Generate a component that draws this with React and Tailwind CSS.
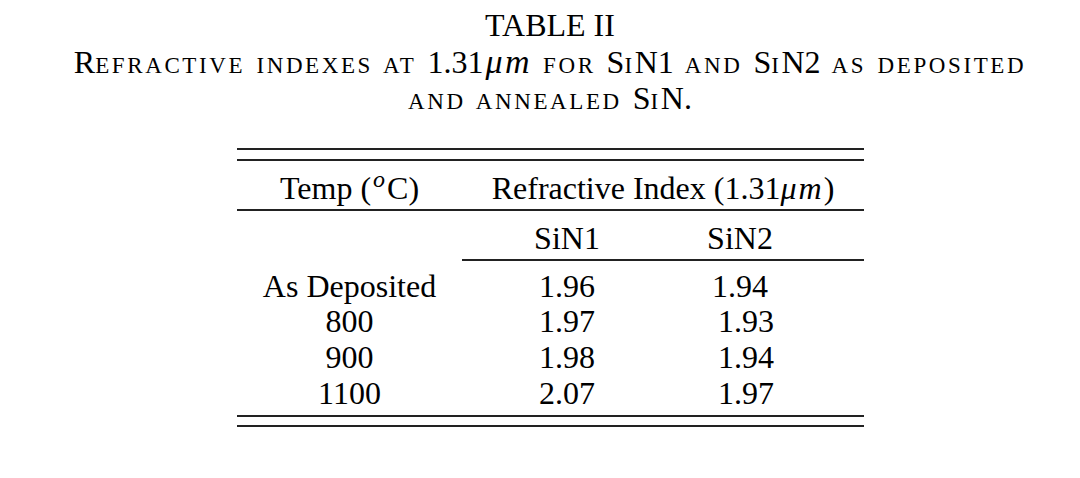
function Sc({ children }) {
  return <span className="text-[23px] leading-none tracking-[2.6px]">{children}</span>;
}

export default function App() {
  const rows = [
    ["As Deposited", "1.96", "1.94", false],
    ["800", "1.97", "1.93", true],
    ["900", "1.98", "1.94", true],
    ["1100", "2.07", "1.97", true],
  ];

  return (
    <div className="min-h-screen w-[1080px] bg-white text-black font-['Liberation_Serif','Times_New_Roman',serif]">
      {/* CAPTION */}
      <div className="pl-[20px] pt-[7px] text-center text-[32px] leading-[36.5px]">
        <div>TABLE II</div>
        <div className="whitespace-nowrap [word-spacing:3px]">
          R<Sc>EFRACTIVE INDEXES AT</Sc> 1.31<span className="pl-[2px] text-[34px] leading-none italic tracking-[2.5px]">μm</span> <Sc>FOR</Sc> S<Sc>I</Sc>N1 <Sc>AND</Sc> S<Sc>I</Sc>N2 <Sc>AS DEPOSITED</Sc>
        </div>
        <div className="[word-spacing:3px]">
          <Sc>AND ANNEALED</Sc> S<Sc>I</Sc>N.
        </div>
      </div>

      {/* TABLE */}
      <div className="ml-[237px] mt-[31px] w-[627px] text-[32px] leading-[36px]">
        <div className="h-[2px] bg-[#222]" />
        <div className="mt-[9px] h-[2px] bg-[#222]" />

        <div className="grid grid-cols-[225px_402px] pt-[9px] pb-[3px]">
          <div className="text-center">
            Temp (<sup className="mx-[2px] text-[24px] italic">o</sup>C)
          </div>
          <div className="text-center">
            Refractive Index (1.31<span className="italic tracking-[2px]">μm</span>)
          </div>
        </div>
        <div className="h-[2px] bg-[#222]" />

        <div className="grid grid-cols-[225px_210px_192px] pt-[9px] pb-[3px]">
          <div />
          <div className="text-center">SiN1</div>
          <div className="pr-[56px] text-center">SiN2</div>
        </div>
        <div className="ml-[225px] h-[2px] bg-[#222]" />

        <div className="pt-[8px] pb-[4px]">
          {rows.map(([t, a, b, shift]) => (
            <div key={t} className="grid grid-cols-[225px_210px_192px] leading-[35.7px]">
              <div className="text-center">{t}</div>
              <div className="text-center">{a}</div>
              <div className={shift ? "pl-[12px] pr-[56px] text-center" : "pr-[56px] text-center"}>{b}</div>
            </div>
          ))}
        </div>
        <div className="h-[2px] bg-[#222]" />
        <div className="mt-[8px] h-[2px] bg-[#222]" />
      </div>
    </div>
  );
}
